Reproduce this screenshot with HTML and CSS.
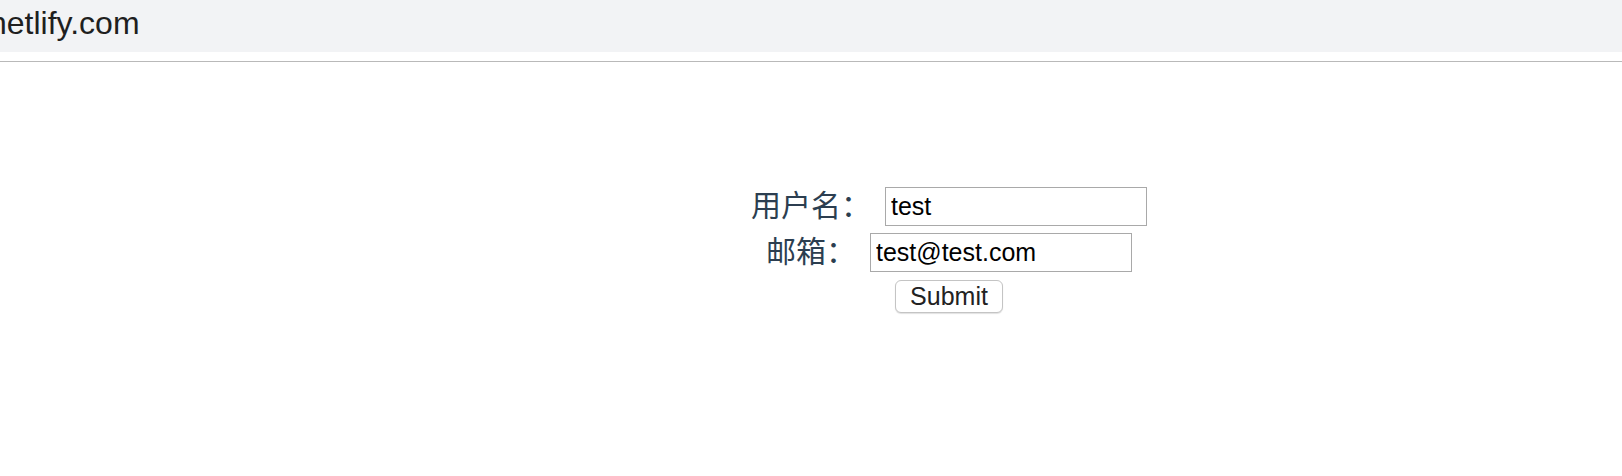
FILE: index.html
```html
<!DOCTYPE html>
<html lang="zh-CN">
<head>
<meta charset="utf-8">
<title>netlify.com</title>
<link rel="stylesheet" href="styles.css">
</head>
<body>
<div class="topbar"><span class="url">netlify.com</span></div>
<div class="rule"></div>
<main class="app">
  <form class="form">
    <div class="row">
      <label class="label" for="u">用户名：</label>
      <input class="field" id="u" type="text" value="test">
    </div>
    <div class="row">
      <label class="label" for="e">邮箱：</label>
      <input class="field" id="e" type="text" value="test@test.com">
    </div>
    <button class="submit" type="button">Submit</button>
  </form>
</main>
</body>
</html>
```

FILE: styles.css
```css
html, body {
  margin: 0;
  padding: 0;
  background: #ffffff;
}

body {
  width: 1622px;
  height: 476px;
  overflow: hidden;
  font-family: "Liberation Sans", Arial, sans-serif;
}

.topbar {
  height: 52px;
  box-sizing: border-box;
  padding-top: 5px;
  background: #f2f3f5;
  overflow: hidden;
}

.url {
  display: block;
  margin-left: -11px;
  font-size: 32px;
  color: #1f1f1f;
  white-space: nowrap;
}

.rule {
  margin-top: 9px;
  height: 1px;
  background: #b9b9b9;
}

.app {
  padding-left: 276px;
  padding-top: 125px;
}

.form {
  display: flex;
  flex-direction: column;
  align-items: center;
  gap: 7px;
  margin: 0;
}

.row {
  display: flex;
  align-items: center;
  gap: 14px;
}

.label {
  font-family: "Noto Sans CJK SC", "Liberation Sans", sans-serif;
  font-size: 30px;
  line-height: 1;
  color: #2c3e50;
  padding-bottom: 8px;
}

.field {
  width: 262px;
  height: 39px;
  box-sizing: border-box;
  margin: 0;
  padding: 0 5px;
  border: 1px solid #a9a9a9;
  border-radius: 0;
  background: #ffffff;
  font-family: "Liberation Sans", Arial, sans-serif;
  font-size: 25px;
  color: #000000;
  outline: none;
}

.submit {
  margin-top: 1px;
  width: 108px;
  height: 33px;
  box-sizing: border-box;
  padding: 0;
  border: 1px solid #c4c4c4;
  border-radius: 6px;
  background: #ffffff;
  box-shadow: 0 1px 1px rgba(0, 0, 0, 0.12);
  font-family: "Liberation Sans", Arial, sans-serif;
  font-size: 25px;
  color: #222222;
}
```
